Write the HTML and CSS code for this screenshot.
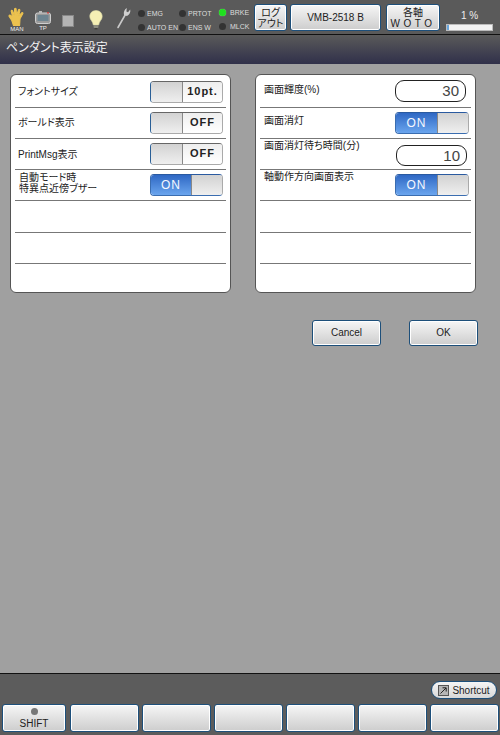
FILE: index.html
```
<!DOCTYPE html>
<html lang="ja">
<head>
<meta charset="utf-8">
<title>ペンダント表示設定</title>
<link rel="stylesheet" href="styles.css">
</head>
<body>
<div class="app">
  <header class="topbar">
    <div class="icon-cell hand">
      <svg width="18" height="20" viewBox="0 0 18 20"><path d="M5.5 18.5 L3.8 13.5 L1 9.2 Q1 7.8 2.4 8.2 L4.8 10.6 L3.2 4 Q3.4 2.8 4.4 3.6 L6.2 8.4 L6.6 1.8 Q7.4 .8 8.1 1.8 L8.5 8.4 L10.6 2.6 Q11.5 2 11.9 3.1 L10.7 9.2 L14 5.6 Q15.1 5.4 14.9 6.6 L12 11.8 L11.6 18.5 Z" fill="#ecc24f" stroke="#ecc24f" stroke-width="1.1" stroke-linejoin="round"/></svg>
      <span class="icon-label">MAN</span>
    </div>
    <div class="icon-cell tp">
      <svg width="16" height="13" viewBox="0 0 16 13"><rect x=".5" y="2" width="15" height="10.5" rx="2" fill="#9a9a9a" stroke="#cfcfcf"/><rect x="2.5" y="4" width="11" height="6" fill="#6d8490"/><rect x="4" y="0" width="3" height="2" fill="#bbb"/><rect x="12" y="1" width="2" height="1.5" fill="#c24a4a"/></svg>
      <span class="icon-label">TP</span>
    </div>
    <div class="stop-cell"><span class="stop"></span></div>
    <div class="bulb-cell">
      <svg width="14" height="20" viewBox="0 0 14 20"><path d="M7 .5 C3 .5 .8 3.4 .8 6.4 C.8 9.8 3.8 11 4.3 15 L9.7 15 C10.2 11 13.2 9.8 13.2 6.4 C13.2 3.4 11 .5 7 .5 Z" fill="#f5efb4" stroke="#d8d8a8" stroke-width=".6"/><rect x="4.6" y="15.2" width="4.8" height="2.8" rx=".8" fill="#8d8d80"/><rect x="5.6" y="18" width="2.8" height="1.4" fill="#3f3f3a"/></svg>
    </div>
    <div class="wrench-cell">
      <svg width="15" height="22" viewBox="0 0 15 22"><path d="M2 20.5 L9.4 7.5" stroke="#c9c9c9" stroke-width="1.6" stroke-linecap="round" fill="none"/><path d="M8 8 C7.4 5 8.4 2.4 10.8 1 L10.4 4.4 L12 5.2 L14.2 2.6 C14.8 5.2 13.6 8 11 9 Z" fill="#d0d0d0"/></svg>
    </div>
    <div class="lamps">
      <div class="lamp"><i class="dot"></i>EMG</div>
      <div class="lamp"><i class="dot"></i>PRTOT</div>
      <div class="lamp l3"><i class="dot green"></i>BRKE</div>
      <div class="lamp"><i class="dot"></i>AUTO EN</div>
      <div class="lamp"><i class="dot"></i>ENS W</div>
      <div class="lamp l3"><i class="dot"></i>MLCK</div>
    </div>
    <button class="btn tbtn logout">ログ<br>アウト</button>
    <button class="btn tbtn model">VMB-2518 B</button>
    <button class="btn tbtn axis">各軸<br><span class="spaced">WOTO</span></button>
    <div class="meter">
      <span class="meter-text">1 %</span>
      <span class="meter-bar"><i class="meter-fill"></i></span>
    </div>
  </header>
  <div class="titlebar">ペンダント表示設定</div>
  <main class="content">
    <div class="cards">
      <section class="card">
        <div class="row"><span class="label">フォントサイズ</span>
          <span class="toggle off"><i class="knob"></i><b class="val">10pt.</b></span></div>
        <div class="row"><span class="label">ボールド表示</span>
          <span class="toggle off"><i class="knob"></i><b class="val">OFF</b></span></div>
        <div class="row"><span class="label lower">PrintMsg表示</span>
          <span class="toggle off"><i class="knob"></i><b class="val">OFF</b></span></div>
        <div class="row"><span class="label tight">自動モード時<br>特異点近傍ブザー</span>
          <span class="toggle on"><b class="val">ON</b><i class="knob"></i></span></div>
        <div class="row"></div>
        <div class="row"></div>
        <div class="row last"></div>
      </section>
      <section class="card">
        <div class="row"><span class="label up">画面輝度(%)</span>
          <span class="field">30</span></div>
        <div class="row"><span class="label up">画面消灯</span>
          <span class="toggle on wide"><b class="val">ON</b><i class="knob"></i></span></div>
        <div class="row"><span class="label top">画面消灯待ち時間(分)</span>
          <span class="field low">10</span></div>
        <div class="row"><span class="label top">軸動作方向画面表示</span>
          <span class="toggle on wide"><b class="val">ON</b><i class="knob"></i></span></div>
        <div class="row"></div>
        <div class="row"></div>
        <div class="row last"></div>
      </section>
    </div>
    <div class="actions">
      <button class="btn act">Cancel</button>
      <button class="btn act">OK</button>
    </div>
  </main>
  <footer class="bottom">
    <div class="shortcut-row">
      <button class="shortcut">
        <svg width="11" height="11" viewBox="0 0 11 11"><rect x=".5" y=".5" width="10" height="10" fill="#b5b5b5" stroke="#555"/><path d="M2.5 8.5 L8 3 M4.5 2.8 H8.2 V6.5" stroke="#222" fill="none"/></svg>
        Shortcut
      </button>
    </div>
    <div class="keys">
      <button class="btn key first"><i class="key-dot"></i>SHIFT</button>
      <button class="btn key"></button>
      <button class="btn key"></button>
      <button class="btn key"></button>
      <button class="btn key"></button>
      <button class="btn key"></button>
      <button class="btn key"></button>
    </div>
  </footer>
</div>
</body>
</html>
```
FILE: styles.css
```
* { box-sizing: border-box; }
html, body { margin: 0; padding: 0; }
body { width: 500px; height: 735px; overflow: hidden; font-family: "Liberation Sans", "Noto Sans CJK JP", sans-serif; font-feature-settings: "palt"; }
.app { width: 500px; height: 735px; display: flex; flex-direction: column; background: #a0a0a0; }

.btn {
  border: 1px solid #1d4f7a; border-radius: 3px; padding: 0; margin: 0;
  background: linear-gradient(#f6f6f6, #cdcdcd);
  box-shadow: inset 0 0 0 1px #fff;
  color: #222; font-family: inherit; font-size: 10px; line-height: 10px; text-align: center;
  font-feature-settings: "palt";
}

.topbar { height: 35px; background: #5a5a5a; border-bottom: 1px solid #111; display: flex; align-items: flex-start; }
.icon-cell { display: flex; flex-direction: column; align-items: center; }
.icon-label { font-size: 6px; line-height: 7px; color: #eee; }
.hand { width: 18px; margin: 7px 0 0 8px; }
.hand svg { display: block; margin-bottom: -1px; }
.tp { width: 16px; margin: 11px 0 0 9px; }
.tp svg { display: block; margin-bottom: 1px; }
.stop-cell { margin: 15px 0 0 11px; }
.stop { display: block; width: 12px; height: 12px; background: #b4b4b4; border: 1px solid #888; }
.bulb-cell { margin: 10px 0 0 15px; }
.wrench-cell { margin: 7px 0 0 13px; }
.bulb-cell svg, .wrench-cell svg { display: block; }
.lamps { display: grid; grid-template-columns: 41px 40px 35px; grid-auto-rows: 14px; margin: 6px 0 0 7px; }
.lamp { display: flex; align-items: center; gap: 2px; font-size: 7px; color: #ddd; white-space: nowrap; }
.dot { width: 7px; height: 7px; border-radius: 50%; background: #333; flex: none; }
.dot.green { background: #1ee01e; box-shadow: 0 0 1px #8f8; }
.l3 { position: relative; top: -1px; gap: 4px; }
.tbtn { height: 27px; margin-top: 4px; color: #222; }
.logout { width: 33px; margin-left: 0; font-size: 10px; line-height: 11px; }
.model { width: 91px; margin-left: 3px; }
.axis { width: 54px; margin-left: 5px; line-height: 11px; }
.spaced { letter-spacing: 3.5px; }
.meter { width: 47px; margin: 10px 0 0 6px; display: flex; flex-direction: column; align-items: center; }
.meter-text { font-size: 10px; line-height: 11px; color: #eee; margin-bottom: 3px; }
.meter-bar { display: block; width: 47px; height: 7px; background: #f2f2f2; border: 1px solid #bbb; }
.meter-fill { display: block; width: 2px; height: 5px; background: #6aa6dc; }

.titlebar { height: 29px; background: linear-gradient(#5a5a5a, #30304a); color: #f2f2f2; font-size: 12px; line-height: 26px; padding-left: 6px; }

.content { flex: 1; padding: 10px 24px 0 10px; display: flex; flex-direction: column; }
.cards { display: flex; gap: 24px; }
.card { width: 221px; height: 219px; background: #fff; border: 1px solid #555; border-radius: 6px; padding: 1.7px 4px 0; }
.row { height: 31.2px; border-bottom: 1px solid #777; display: flex; align-items: center; justify-content: space-between; padding: 0 3px 0 3px; }
.row.last { border-bottom: 0; }
.label { font-size: 10px; line-height: 11px; color: #222; }
.label.lower { margin-top: 1px; }
.label.tight { line-height: 10.5px; margin-top: -3px; padding-left: 1px; }
.label.up { margin-top: -4px; padding-left: 1px; }
.label.top { align-self: flex-start; margin-top: 1px; padding-left: 1px; }

.toggle { width: 73px; height: 22px; display: flex; border: 1px solid #aaa; border-radius: 4px; overflow: hidden; background: #fff; font-size: 11px; letter-spacing: 1px; }
.toggle.off { border-left-color: #2a5f96; border-top-color: #666; }
.toggle.wide { width: 74px; margin-right: -1px; }
.knob { width: 32px; background: linear-gradient(#d2d2d2, #efefef); border-right: 1px solid #888; flex: none; }
.toggle .val { flex: 1; text-align: center; line-height: 19px; font-weight: bold; color: #222; background: linear-gradient(#eee, #fff); }
.toggle.on { border-color: #3a6db0; border-right-color: #aaa; border-top-color: #2a5aa0; }
.toggle.on .val { background: linear-gradient(#2f68c4, #6aa5ee); color: #f4f8ff; font-weight: normal; font-size: 12px; line-height: 20px; }
.toggle.on .knob { border-right: 0; border-left: 1px solid #888; width: 31px; }

.field { width: 71px; height: 22px; border: 1px solid #222; border-radius: 9px; font-size: 15px; line-height: 20px; color: #444; text-align: right; padding-right: 6px; margin-right: 2px; margin-top: -1px; background: #fff; }
.field.low { margin-top: 3px; margin-right: 1px; line-height: 19px; height: 21px; }

.actions { display: flex; justify-content: flex-end; gap: 28px; margin: 27px -2px 0 0; }
.act { width: 69px; height: 26px; color: #222; }

.bottom { height: 62px; background: #5c5c5c; border-top: 1px solid #111; display: flex; flex-direction: column; padding-top: 7px; }
.shortcut-row { height: 18px; display: flex; justify-content: flex-end; padding-right: 3px; }
.shortcut { width: 66px; height: 18px; padding: 0; border: 1px solid #1d4f7a; border-radius: 9px; background: linear-gradient(#f5f5f5, #d8d8d8); font-family: inherit; font-size: 10px; color: #222; display: flex; align-items: center; justify-content: center; gap: 3px; }
.keys { display: flex; gap: 3px; margin-top: 5px; padding: 0 1px 0 2px; }
.key { flex: 1; height: 28px; }
.key.first { flex: 0 0 64px; margin-right: 1px; display: flex; flex-direction: column; align-items: center; justify-content: flex-end; padding-bottom: 2px; }
.key-dot { width: 7px; height: 7px; border-radius: 50%; background: #777; margin-bottom: 4px; }
```
